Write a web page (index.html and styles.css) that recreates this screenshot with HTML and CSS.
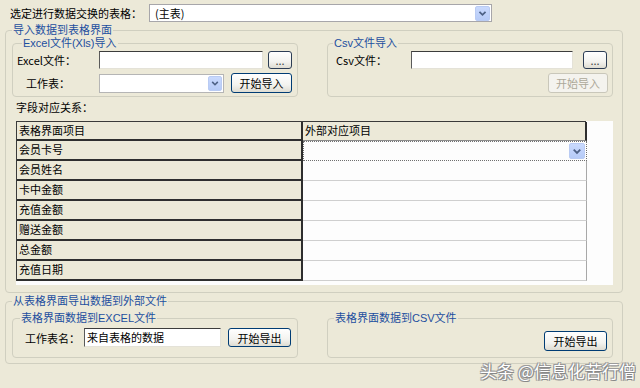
FILE: index.html
```html
<!DOCTYPE html>
<html lang="zh">
<head>
<meta charset="utf-8">
<title>数据交换</title>
<link rel="stylesheet" href="styles.css">
</head>
<body>
<div class="toprow">
  <span class="toplabel">选定进行数据交换的表格：</span>
  <div class="combo combo-top"><span class="combo-text">(主表)</span><span class="arrow"><svg viewBox="0 0 15 15" width="15" height="15"><polyline points="4,5.5 7.5,9 11,5.5" fill="none" stroke="#4d6185" stroke-width="2"/></svg></span></div>
</div>

<div class="group outer outer-import">
  <div class="cap cap-outer">导入数据到表格界面</div>
  <div class="pair pair-import">
    <div class="group inner inner-import">
      <div class="cap cap-xls">Excel文件(Xls)导入</div>
      <div class="row row-a">
        <span class="lbl lbl-xls">Excel文件：</span>
        <div class="edit edit-xls"></div>
        <button class="btn btn-dots">...</button>
      </div>
      <div class="row row-b">
        <span class="lbl lbl-sheet">工作表：</span>
        <div class="combo combo-sheet"><span class="combo-text"></span><span class="arrow"><svg viewBox="0 0 15 15" width="14" height="15"><polyline points="4,5.5 7.5,9 11,5.5" fill="none" stroke="#4d6185" stroke-width="2"/></svg></span></div>
        <button class="btn btn-import">开始导入</button>
      </div>
    </div>
    <div class="group inner inner-import">
      <div class="cap cap-csv">Csv文件导入</div>
      <div class="row row-a">
        <span class="lbl lbl-csv">Csv文件：</span>
        <div class="edit edit-csv"></div>
        <button class="btn btn-dots btn-dots-csv">...</button>
      </div>
      <div class="row row-b row-end">
        <button class="btn btn-import btn-disabled">开始导入</button>
      </div>
    </div>
  </div>

  <div class="fieldlabel">字段对应关系：</div>
  <div class="grid">
    <div class="table">
      <div class="cell hdr c1">表格界面项目</div>
      <div class="cell hdr c2">外部对应项目</div>
      <div class="cell c1">会员卡号</div>
      <div class="cell c2 c2-focus"><span class="arrow arrow-cell"><svg viewBox="0 0 15 15" width="15" height="15"><polyline points="4,5.5 7.5,9 11,5.5" fill="none" stroke="#4d6185" stroke-width="2"/></svg></span></div>
      <div class="cell c1">会员姓名</div>
      <div class="cell c2"></div>
      <div class="cell c1">卡中金额</div>
      <div class="cell c2"></div>
      <div class="cell c1">充值金额</div>
      <div class="cell c2"></div>
      <div class="cell c1">赠送金额</div>
      <div class="cell c2"></div>
      <div class="cell c1">总金额</div>
      <div class="cell c2"></div>
      <div class="cell c1">充值日期</div>
      <div class="cell c2"></div>
    </div>
  </div>
</div>

<div class="group outer outer-export">
  <div class="cap cap-outer">从表格界面导出数据到外部文件</div>
  <div class="pair pair-export">
    <div class="group inner inner-export">
      <div class="cap cap-xls-out">表格界面数据到EXCEL文件</div>
      <div class="row row-out">
        <span class="lbl lbl-sheetname">工作表名：</span>
        <div class="edit edit-sheetname">来自表格的数据</div>
        <button class="btn btn-export">开始导出</button>
      </div>
    </div>
    <div class="group inner inner-export">
      <div class="cap cap-csv-out">表格界面数据到CSV文件</div>
      <div class="row row-out-csv row-end">
        <button class="btn btn-export">开始导出</button>
      </div>
    </div>
  </div>
</div>

<div class="watermark">头条 @信息化苦行僧</div>
</body>
</html>
```

FILE: styles.css
```css
* { box-sizing: border-box; }

html, body {
  margin: 0;
  width: 640px;
  height: 388px;
  overflow: hidden;
}

body {
  position: relative;
  padding-top: 4px;
  background: #ece9d8;
  font-family: "Noto Sans CJK SC", "Noto Sans", sans-serif;
  font-size: 11px;
  line-height: 14px;
  color: #000;
}

/* top row */
.toprow {
  display: flex;
  align-items: center;
  height: 18px;
}
.toplabel {
  margin-left: 10px;
  width: 139px;
}

/* combo boxes */
.combo {
  display: flex;
  align-items: center;
  background: #fff;
  border: 1px solid #a7a6aa;
}
.combo-text {
  flex: 1;
  padding-left: 5px;
}
.combo-top {
  width: 343px;
  height: 18px;
}
.combo-top .arrow { margin-right: 1px; }
.combo-sheet {
  width: 125px;
  height: 19px;
  border-color: #b5b5b5;
}
.combo-sheet .arrow { margin-right: 1px; width: 14px; }

.arrow {
  display: flex;
  align-items: center;
  justify-content: center;
  width: 15px;
  height: 15px;
  border-radius: 2px;
  background: linear-gradient(#c9d9fd, #b6cbf7);
  border: 1px solid #b9cbf3;
}
.arrow svg { display: block; }

/* group boxes */
.group {
  border: 1px solid #d0cfc0;
  border-radius: 4px;
}
.cap {
  width: fit-content;
  margin-top: -7px;
  padding: 0 1px;
  background: #ece9d8;
  color: #1d4f9f;
  font-family: "Liberation Sans", "Noto Sans CJK SC", sans-serif;
  line-height: 12px;
}
.outer {
  margin-left: 5px;
  width: 618px;
}
.outer-import {
  margin-top: 8px;
  height: 263px;
}
.outer-export {
  margin-top: 8px;
  height: 63px;
}
.cap-outer { margin-left: 6px; }

.pair {
  display: flex;
  gap: 29px;
  padding-left: 6px;
}
.pair-import { margin-top: 7px; }
.pair-export { margin-top: 11px; }

.inner { width: 286px; }
.inner-import { height: 54px; }
.inner-export { height: 40px; }

.cap-xls { margin-left: 9px; }
.cap-csv { margin-left: 5px; }
.cap-xls-out { margin-left: 7px; }
.cap-csv-out { margin-left: 6px; }

/* rows */
.row {
  display: flex;
  align-items: center;
}
.row-a { margin-top: 2px; height: 18px; }
.row-b { margin-top: 4px; height: 20px; }
.row-end { justify-content: flex-end; }
.row-out { margin-top: 4px; height: 19px; }
.row-out-csv { margin-top: 7px; height: 19px; padding-right: 5px; }

.lbl { white-space: nowrap; }
.lbl-xls { margin-left: 4px; width: 82px; }
.lbl-sheet { margin-left: 13px; width: 73px; }
.lbl-csv { margin-left: 8px; width: 75px; }
.lbl-sheetname { margin-left: 12px; width: 59px; }

/* edits */
.edit {
  height: 18px;
  background: #fff;
  border-style: solid;
  border-width: 1px;
  border-color: #3c3c3c #e4e2d8 #e4e2d8 #5a5a5a;
  padding-left: 2px;
  line-height: 16px;
}
.edit-xls { width: 164px; }
.edit-csv { width: 162px; }
.edit-sheetname { width: 137px; height: 19px; }

/* buttons */
.btn {
  font: inherit;
  line-height: 14px;
  padding: 0;
  color: #000;
  border: 1px solid #003c74;
  border-radius: 3px;
  background: linear-gradient(#ffffff, #f3f3ef 60%, #dedcd2);
  text-align: center;
}
.btn-dots {
  margin-left: 5px;
  width: 24px;
  height: 18px;
  color: #444;
  border-color: #2c3d55;
}
.btn-dots-csv { margin-left: 10px; }
.btn-import {
  margin-left: 7px;
  width: 61px;
  height: 20px;
}
.row-end .btn-import { margin-left: 0; margin-right: 4px; width: 60px; }
.btn-disabled {
  color: #aca899;
  border-color: #c9c7ba;
  background: #f4f3ee;
}
.btn-export {
  margin-left: 7px;
  width: 63px;
  height: 19px;
}
.row-out-csv .btn-export { margin-left: 0; height: 20px; }

/* field mapping */
.fieldlabel {
  margin: 3px 0 0 10px;
}
.grid {
  margin: 7px 0 0 10px;
  width: 597px;
  height: 164px;
  background: #fdfdfd;
}
.table {
  display: grid;
  grid-template-columns: 286px 284px;
  grid-template-rows: 19px repeat(7, 20px);
  width: 570px;
  border-top: 1px solid #3a3a3a;
  border-left: 1px solid #3a3a3a;
}
.cell {
  padding-left: 2px;
  line-height: 17px;
  white-space: nowrap;
}
.c1 {
  background: #ece9d8;
  border-right: 2px solid #2e2e2e;
  border-bottom: 2px solid #2e2e2e;
}
.c2 {
  background: #fdfdfd;
  border-right: 1px solid #a8a8a8;
  border-bottom: 1px solid #cfcfcf;
}
.hdr.c2 {
  background: #ece9d8;
  border-right: 2px solid #2e2e2e;
  border-bottom: 1px solid #8c8c8c;
}
.c2-focus {
  display: flex;
  align-items: center;
  justify-content: flex-end;
  border: 1px dotted #6f6f6f;
  padding-right: 1px;
}
.arrow-cell { width: 16px; height: 16px; }

/* watermark */
.watermark {
  position: absolute;
  left: 480px;
  top: 361px;
  font-size: 17px;
  line-height: 20px;
  color: #ffffff;
  text-shadow: 0 0 1px #7a7a7a, 1px 1px 0 #8a8a8a, -1px -1px 0 #a0a0a0, 1px -1px 0 #a0a0a0, -1px 1px 0 #a0a0a0;
  white-space: nowrap;
}
```
